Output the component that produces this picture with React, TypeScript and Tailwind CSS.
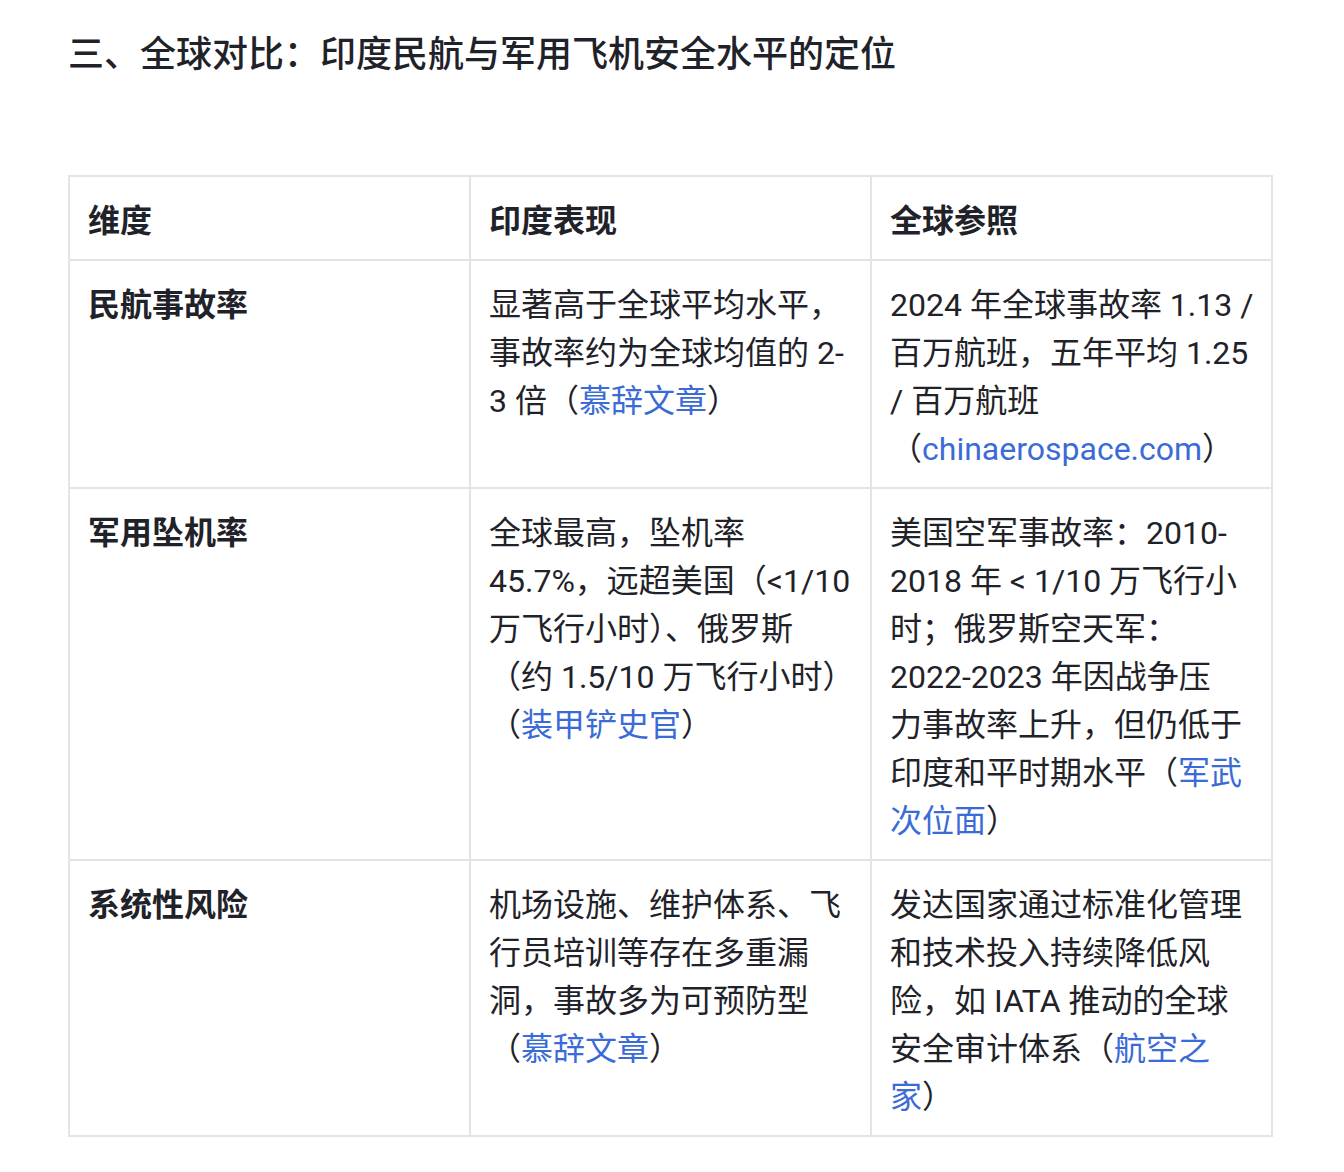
import React from "react";

const font = { fontFamily: "Roboto, 'Noto Sans CJK SC', sans-serif" };

function L({ children }: { children: React.ReactNode }) {
  return <span className="text-[#3b6bd6]">{children}</span>;
}

function Line({ children }: { children: React.ReactNode }) {
  return <span className="block whitespace-nowrap">{children}</span>;
}

const rows: { name: string; india: React.ReactNode; global: React.ReactNode }[] = [
  {
    name: "民航事故率",
    india: (
      <>
        显著高于全球平均水平，事故率约为全球均值的 2-3 倍（<L>慕辞文章</L>）
      </>
    ),
    global: (
      <>
        <Line>2024 年全球事故率 1.13 /</Line>
        <Line>百万航班，五年平均 1.25</Line>
        <Line>/ 百万航班</Line>
        <Line>
          （<L>chinaerospace.com</L>）
        </Line>
      </>
    ),
  },
  {
    name: "军用坠机率",
    india: (
      <>
        全球最高，坠机率 45.7%，远超美国（&lt;1/10 万飞行小时）、俄罗斯（约 1.5/10 万飞行小时）（<L>装甲铲史官</L>）
      </>
    ),
    global: (
      <>
        <Line>美国空军事故率：2010-</Line>
        <Line>2018 年 &lt; 1/10 万飞行小</Line>
        <Line>时；俄罗斯空天军：</Line>
        <Line>2022-2023 年因战争压</Line>
        <Line>力事故率上升，但仍低于</Line>
        <Line>
          印度和平时期水平（<L>军武</L>
        </Line>
        <Line>
          <L>次位面</L>）
        </Line>
      </>
    ),
  },
  {
    name: "系统性风险",
    india: (
      <>
        机场设施、维护体系、飞行员培训等存在多重漏洞，事故多为可预防型（<L>慕辞文章</L>）
      </>
    ),
    global: (
      <>
        发达国家通过标准化管理和技术投入持续降低风险，如 IATA 推动的全球安全审计体系（<L>航空之家</L>）
      </>
    ),
  },
];

const cell = "border-2 border-[#e3e3e8] px-[18px] pt-[20px] pb-[14px] text-left align-top";

export default function App() {
  return (
    <div className="bg-white min-h-[1172px] pl-[68px] pr-[71px] pt-[28px] text-[#1f2329]" style={font}>
      <h2 className="text-[36px] leading-[54px] font-medium m-0">
        三、全球对比：印度民航与军用飞机安全水平的定位
      </h2>
      <table className="mt-[93px] w-full table-fixed border-collapse border-2 border-[#e3e3e8] text-[32px] leading-[48px]">
        <thead>
          <tr>
            <th className={`w-1/3 font-semibold ${cell}`}>维度</th>
            <th className={`w-1/3 font-semibold ${cell}`}>印度表现</th>
            <th className={`w-1/3 font-semibold ${cell}`}>全球参照</th>
          </tr>
        </thead>
        <tbody>
          {rows.map((r) => (
            <tr key={r.name}>
              <td className={`font-semibold ${cell}`}>{r.name}</td>
              <td className={`font-normal ${cell}`}>{r.india}</td>
              <td className={`font-normal ${cell}`}>{r.global}</td>
            </tr>
          ))}
        </tbody>
      </table>
    </div>
  );
}
